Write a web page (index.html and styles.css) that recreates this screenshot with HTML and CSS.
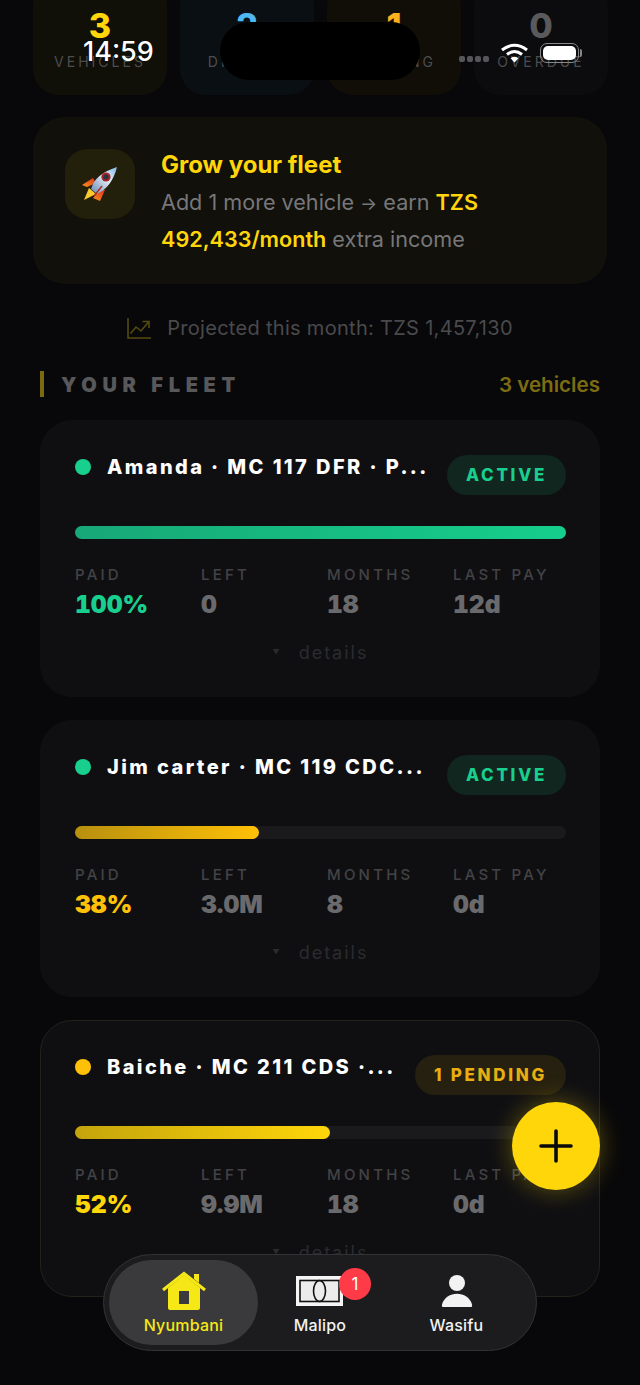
FILE: index.html
```html
<!DOCTYPE html>
<html lang="en">
<head>
    <meta charset="UTF-8">
    <meta name="viewport" content="width=device-width, initial-scale=1.0">
    <title>Nyumbani</title>
    <link rel="stylesheet" href="styles.css">
</head>
<body>
    <div class="screen">
        <div class="stats">
            <div class="stat stat-yellow"><strong>3</strong><span>VEHICLES</span></div>
            <div class="stat stat-blue"><strong>2</strong><span>DRIVING</span></div>
            <div class="stat stat-orange"><strong>1</strong><span>PENDING</span></div>
            <div class="stat stat-grey"><strong>0</strong><span>OVERDUE</span></div>
        </div>

        <div class="promo">
            <div class="promo-icon">
                <svg width="36" height="36" viewBox="0 0 36 36">
                    <defs>
                        <linearGradient id="hull" x1="0" y1="1" x2="1" y2="0">
                            <stop offset="0" stop-color="#5f86b8"/>
                            <stop offset="0.6" stop-color="#e6eef5"/>
                            <stop offset="1" stop-color="#7db6e6"/>
                        </linearGradient>
                        <linearGradient id="fin" x1="1" y1="0" x2="0" y2="1">
                            <stop offset="0" stop-color="#e02a1a"/>
                            <stop offset="1" stop-color="#f79a1e"/>
                        </linearGradient>
                    </defs>
                    <path d="M2 34 L7 22 L14 28 Z" fill="#f9c92e"/>
                    <path d="M0 19 L11 12 L14 17 L5 21 Z" fill="url(#fin)"/>
                    <path d="M18 24 L23 24 L18 35 L11 32 Z" fill="url(#fin)"/>
                    <path d="M9 23 Q13 8 35 1 Q30 21 15 28 Z" fill="url(#hull)"/>
                    <circle cx="24" cy="11" r="4.6" fill="#a4232a"/>
                    <circle cx="24" cy="11" r="2.6" fill="#2b3340"/>
                    <path d="M12 30 L20 20" stroke="#b32a1e" stroke-width="1.4"/>
                </svg>
            </div>
            <div class="promo-text">
                <h2>Grow your fleet</h2>
                <p>Add 1 more vehicle <small>→</small> earn <b>TZS 492,433/month</b> extra income</p>
            </div>
        </div>

        <div class="projected">
            <svg width="24" height="21" viewBox="0 0 24 21" fill="none" stroke="#544b10" stroke-width="1.6">
                <path d="M1 0 V20 H24"/>
                <path d="M3.5 15.5 L9 9 L14 13 L21.5 4"/>
                <path d="M15.5 3.5 H22 V10"/>
            </svg>
            <span>Projected this month: TZS 1,457,130</span>
        </div>

        <div class="section-head">
            <h3>YOUR FLEET</h3>
            <span>3 vehicles</span>
        </div>

        <div class="card">
            <div class="card-top">
                <i class="dot dot-green"></i>
                <div class="name">Amanda · MC 117 DFR · P...</div>
                <div class="badge badge-green">ACTIVE</div>
            </div>
            <div class="track"><div class="fill fill-green" style="width: 100%"></div></div>
            <div class="cols">
                <div><label>PAID</label><b class="green">100%</b></div>
                <div><label>LEFT</label><b>0</b></div>
                <div><label>MONTHS</label><b>18</b></div>
                <div><label>LAST PAY</label><b>12d</b></div>
            </div>
            <div class="details"><small>▼</small>details</div>
        </div>

        <div class="card">
            <div class="card-top">
                <i class="dot dot-green"></i>
                <div class="name">Jim carter · MC 119 CDC...</div>
                <div class="badge badge-green">ACTIVE</div>
            </div>
            <div class="track"><div class="fill fill-orange" style="width: 37.5%"></div></div>
            <div class="cols">
                <div><label>PAID</label><b class="orange">38%</b></div>
                <div><label>LEFT</label><b>3.0M</b></div>
                <div><label>MONTHS</label><b>8</b></div>
                <div><label>LAST PAY</label><b>0d</b></div>
            </div>
            <div class="details"><small>▼</small>details</div>
        </div>

        <div class="card card-pending">
            <div class="card-top">
                <i class="dot dot-orange"></i>
                <div class="name">Baiche · MC 211 CDS ·...</div>
                <div class="badge badge-orange">1 PENDING</div>
            </div>
            <div class="track"><div class="fill fill-yellow" style="width: 52%"></div></div>
            <div class="cols">
                <div><label>PAID</label><b class="yellow">52%</b></div>
                <div><label>LEFT</label><b>9.9M</b></div>
                <div><label>MONTHS</label><b>18</b></div>
                <div><label>LAST PAY</label><b>0d</b></div>
            </div>
            <div class="details"><small>▼</small>details</div>
        </div>

        <!-- phone status bar -->
        <div class="time">14:59</div>
        <div class="island"></div>
        <div class="status-icons">
            <div class="signal"><i></i><i></i><i></i><i></i></div>
            <svg width="27" height="20" viewBox="0 0 27 20" fill="none" stroke="#fff" stroke-width="3">
                <path d="M1 7 Q13.5 -2.5 26 7"/>
                <path d="M6 11.5 Q13.5 5.5 21 11.5"/>
                <path d="M13.5 19.5 L9.6 15.2 Q13.5 12.4 17.4 15.2 Z" fill="#fff" stroke="none"/>
            </svg>
            <div class="battery"><div></div></div>
        </div>

        <button class="fab">
            <svg width="36" height="36" viewBox="0 0 36 36" stroke="#0a0a0a" stroke-width="3.6" stroke-linecap="round">
                <path d="M18 3 V33 M3 18 H33"/>
            </svg>
        </button>

        <nav class="tabbar">
            <div class="tab tab-on">
                <svg width="46" height="40" viewBox="0 0 46 40">
                    <path d="M7 17 L23 4 L39 17 V37 Q39 39 37 39 H9 Q7 39 7 37 Z M18 20 V33 H28 V20 Z" fill="#f6e816" fill-rule="evenodd"/>
                    <path d="M2 19 L23 2.5 L44 19" fill="none" stroke="#f6e816" stroke-width="3"/>
                    <path d="M33 3 H38 V12 L33 8 Z" fill="#f6e816"/>
                </svg>
                <span>Nyumbani</span>
            </div>
            <div class="tab">
                <svg class="icon-money" width="48" height="32" viewBox="0 0 48 32">
                    <rect width="47" height="30" y="1" fill="#f5f5f5"/>
                    <rect x="4" y="5.5" width="39" height="21" fill="#ececec" stroke="#111" stroke-width="1.6"/>
                    <ellipse cx="23.5" cy="16" rx="6" ry="10.5" fill="none" stroke="#111" stroke-width="1.6"/>
                </svg>
                <span>Malipo</span>
                <em class="tab-badge">1</em>
            </div>
            <div class="tab">
                <svg class="icon-person" width="32" height="34" viewBox="0 0 34 36" fill="#f2f2f2">
                    <circle cx="17" cy="9.5" r="8.5"/>
                    <path d="M2 35 Q0.5 35 1 32.5 C3 25 10 21 17 21 C24 21 31 25 33 32.5 Q33.5 35 32 35 Z"/>
                </svg>
                <span>Wasifu</span>
            </div>
        </nav>
    </div>
</body>
</html>
```

FILE: styles.css
```css
* {
    box-sizing: border-box;
}
body {
    margin: 0;
    background-color: #08080a;
    font-family: Inter, 'Noto Sans', sans-serif;
    color: #fff;
}
.screen {
    position: relative;
    width: 640px;
    height: 1385px;
    overflow: hidden;
    padding: 0 40px;
}
.stats {
    display: grid;
    grid-template-columns: repeat(4, 134px);
    gap: 13px;
    margin: -20px -7px 0;
    height: 115px;
}
.stat {
    display: flex;
    flex-direction: column;
    align-items: center;
    padding-top: 27px;
    border-radius: 26px;
    background-color: #0c0c0e;
}
.stat strong {
    font-size: 34px;
    line-height: 38px;
    font-weight: 800;
}
.stat span {
    margin-top: 8px;
    font-size: 14px;
    line-height: 18px;
    letter-spacing: 3px;
    color: #4d4d4f;
}
.stat-yellow {
    background-color: #100f08;
}
.stat-yellow strong {
    color: #ffd60a;
}
.stat-blue {
    background-color: #0a0f13;
}
.stat-blue strong {
    color: #4fb8f0;
}
.stat-orange {
    background-color: #110e08;
}
.stat-orange strong {
    color: #ffb020;
}
.stat-grey strong {
    color: #5a5a5c;
}
.promo {
    display: flex;
    gap: 26px;
    align-items: flex-start;
    height: 167px;
    margin: 22px -7px 0;
    padding: 32px;
    border-radius: 32px;
    background-color: #11100a;
}
.promo-icon {
    flex: none;
    display: flex;
    align-items: center;
    justify-content: center;
    width: 70px;
    height: 70px;
    border-radius: 22px;
    background-color: #221f0a;
}
.promo-text h2 {
    margin: 0;
    font-size: 24px;
    line-height: 32px;
    font-weight: 700;
    color: #ffd60a;
}
.promo-text p {
    margin: 3px 0 0;
    font-size: 21.6px;
    line-height: 37px;
    color: #77777a;
}
.promo-text small {
    font-size: 18px;
    line-height: 1;
}
.promo-text b {
    font-weight: 600;
    color: #ffd60a;
}
.projected {
    display: flex;
    align-items: center;
    justify-content: center;
    gap: 16px;
    margin-top: 31px;
    height: 26px;
    font-size: 20px;
    letter-spacing: 0.3px;
    color: #4a4a4c;
}
.section-head {
    display: flex;
    align-items: center;
    justify-content: space-between;
    height: 26px;
    margin-top: 30px;
    border-left: 4px solid #7a6a10;
    padding: 1px 0 0 17px;
}
.section-head h3 {
    margin: 0;
    font-size: 20px;
    font-weight: 900;
    letter-spacing: 5.7px;
    color: #58585a;
}
.section-head span {
    font-size: 20.6px;
    font-weight: 600;
    color: #7d6d12;
}
.card {
    height: 277px;
    margin-top: 23px;
    padding: 34px 33px 34px 34px;
    border: 1px solid #101013;
    border-radius: 32px;
    background-color: #0f0f12;
}
.card-pending {
    border-color: #22221a;
}
.card-top {
    display: flex;
    align-items: flex-start;
    height: 39px;
}
.dot {
    flex: none;
    width: 16px;
    height: 16px;
    margin-top: 4px;
    border-radius: 50%;
}
.dot-green {
    background-color: #19cf8e;
}
.dot-orange {
    background-color: #ffc107;
}
.name {
    flex: 1;
    min-width: 0;
    margin: -1px 0 0 16px;
    white-space: nowrap;
    font-size: 20px;
    line-height: 26px;
    font-weight: 800;
    letter-spacing: 2.4px;
}
.badge {
    flex: none;
    height: 40px;
    padding: 0 19px;
    border-radius: 20px;
    font-size: 17px;
    line-height: 40px;
    font-weight: 800;
    letter-spacing: 2.7px;
}
.badge-green {
    background-color: #10261f;
    color: #19cf8e;
}
.badge-orange {
    background-color: #262010;
    color: #e8ae12;
}
.track {
    height: 13px;
    margin-top: 32px;
    border-radius: 7px;
    background-color: #1a1a1d;
}
.fill {
    height: 100%;
    border-radius: 7px;
}
.fill-green {
    background: linear-gradient(90deg, #17a877, #16cf8c);
}
.fill-orange {
    background: linear-gradient(90deg, #b8900f, #ffc107);
}
.fill-yellow {
    background: linear-gradient(90deg, #c4a40c, #ffd60a);
}
.cols {
    display: grid;
    grid-template-columns: repeat(4, 113px);
    gap: 13px;
    margin-top: 27px;
}
.cols label {
    display: block;
    font-size: 15px;
    line-height: 18px;
    font-weight: 500;
    letter-spacing: 3.2px;
    color: #434345;
    white-space: nowrap;
}
.cols b {
    display: block;
    margin-top: 5px;
    font-size: 24.6px;
    line-height: 30px;
    font-weight: 900;
    font-variant-numeric: tabular-nums;
    color: #6a6a6c;
}
.cols .green {
    color: #19cf8e;
}
.cols .orange {
    color: #ffc107;
}
.cols .yellow {
    color: #ffd60a;
}
.details {
    display: flex;
    align-items: center;
    justify-content: center;
    gap: 17px;
    margin-top: 22px;
    font-size: 18px;
    line-height: 24px;
    letter-spacing: 2px;
    color: #2b2b2e;
}
.details small {
    font-size: 7px;
}
.time {
    position: absolute;
    left: 83px;
    top: 36px;
    font-size: 27px;
    line-height: 32px;
    font-weight: 500;
    text-shadow: 0 0 1px #000;
}
.island {
    position: absolute;
    left: 220px;
    top: 22px;
    width: 200px;
    height: 58px;
    border-radius: 29px;
    background-color: #000;
}
.status-icons {
    position: absolute;
    left: 459px;
    top: 43px;
    display: flex;
    align-items: center;
    gap: 12px;
    height: 20px;
}
.signal {
    display: flex;
    gap: 2px;
    width: 30px;
    margin-top: 12px;
}
.signal i {
    width: 6px;
    height: 6px;
    border-radius: 2px;
    background-color: #55555a;
}
.battery {
    position: relative;
    width: 39px;
    height: 20px;
    padding: 2px;
    border: 1px solid #888;
    border-radius: 7px;
}
.battery::after {
    content: "";
    position: absolute;
    right: -4px;
    top: 5px;
    width: 2px;
    height: 8px;
    border-radius: 0 2px 2px 0;
    background-color: #888;
}
.battery div {
    height: 100%;
    border-radius: 5px;
    background-color: #fff;
}
.fab {
    position: absolute;
    left: 512px;
    top: 1102px;
    display: flex;
    align-items: center;
    justify-content: center;
    width: 88px;
    height: 88px;
    padding: 0;
    border: none;
    border-radius: 50%;
    background-color: #ffd60a;
    box-shadow: 0 0 26px rgba(255, 214, 10, 0.35);
}
.tabbar {
    position: absolute;
    left: 103px;
    top: 1254px;
    display: grid;
    grid-template-columns: 149px 124px 149px;
    width: 434px;
    height: 97px;
    padding: 5px;
    border: 1px solid #333336;
    border-radius: 49px;
    background-color: #1c1c1e;
}
.tab {
    position: relative;
    display: flex;
    flex-direction: column;
    align-items: center;
    justify-content: flex-end;
    gap: 4px;
    padding-bottom: 10px;
    border-radius: 43px;
    font-size: 16px;
    line-height: 20px;
    font-weight: 500;
    letter-spacing: 0.2px;
    color: #f2f2f2;
}
.tab-on {
    background-color: #3a3a3c;
    color: #f6e816;
}
.icon-money {
    margin-bottom: 4px;
}
.icon-person {
    margin-bottom: 3px;
}
.tab-badge {
    position: absolute;
    left: 81px;
    top: 8px;
    width: 32px;
    height: 32px;
    border-radius: 50%;
    background-color: #ff3b47;
    font-style: normal;
    font-size: 17px;
    font-weight: 400;
    line-height: 32px;
    text-align: center;
    color: #fff;
}
```
